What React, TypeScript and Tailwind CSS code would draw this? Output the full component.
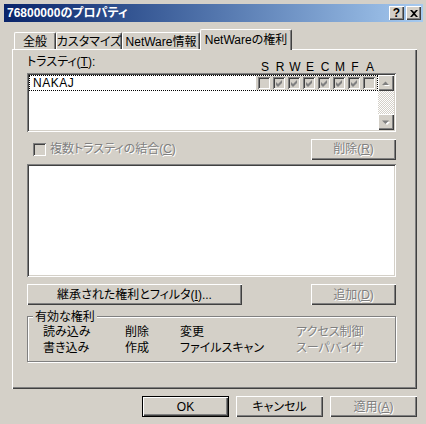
import type { ReactNode } from 'react';

const raised = 'shadow-[inset_1px_1px_#fff,inset_-1px_-1px_#404040,inset_-2px_-2px_#808080]';
const sunken = 'shadow-[inset_1px_1px_#808080,inset_-1px_-1px_#fff,inset_2px_2px_#404040,inset_-2px_-2px_#d4d0c8]';
const dim = 'text-[#808080] [text-shadow:1px_1px_0_#fff]';

const letters = ['S', 'R', 'W', 'E', 'C', 'M', 'F', 'A'];
const checked = [false, true, true, true, true, true, true, false];

function Check({ on }: { on: boolean }) {
  return (
    <div className="w-[12px] h-[12px] bg-[#d4d0c8] shadow-[inset_1px_1px_#808080,inset_-1px_-1px_#fff,inset_2px_2px_#404040] flex items-center justify-center">
      {on && (
        <svg width="7" height="7" viewBox="0 0 7 7" className="mt-[1px] ml-[1px]">
          <polygon points="0,2 2,4 6,0 6,3 2,7 0,5" fill="#808080" />
        </svg>
      )}
    </div>
  );
}

function Button({ children, w, disabled, def }: { children: ReactNode; w: string; disabled?: boolean; def?: boolean }) {
  return (
    <div className={`${w} h-[21px] ${def ? 'border border-black' : ''}`}>
      <div className={`h-full ${raised} flex items-center justify-center whitespace-nowrap ${disabled ? dim : ''}`}>{children}</div>
    </div>
  );
}

function Arrow({ up }: { up?: boolean }) {
  return (
    <div className={`w-[16px] h-[16px] bg-[#d4d0c8] ${raised} flex items-center justify-center`}>
      <svg width="8" height="5" viewBox="0 0 8 5">
        <polygon points={up ? '1,4 4,1 7,4' : '1,1 4,4 7,1'} fill="#fff" transform="translate(1,1)" />
        <polygon points={up ? '0,4 3.5,0.5 7,4' : '0,0.5 3.5,4 7,0.5'} fill="#808080" />
      </svg>
    </div>
  );
}

export default function App() {
  return (
    <div className="w-[426px] h-[424px] overflow-hidden bg-[#d4d0c8] pt-[4px] pl-[4px] pr-[3px] text-[12px] leading-[14px] text-black font-['Liberation_Sans','Noto_Sans_CJK_JP',sans-serif] [font-feature-settings:'palt']">
      {/* title bar */}
      <div className="h-[18px] flex items-center pl-[3px] pr-[2px] bg-gradient-to-r from-[#0a246a] to-[#a6caf0]">
        <span className="text-white font-bold">76800000のプロパティ</span>
        <div className="ml-auto flex gap-[2px]">
          <div className={`w-[15px] h-[14px] bg-[#d4d0c8] ${raised} flex items-center justify-center font-bold text-[12px] leading-none pb-[1px]`}>?</div>
          <div className={`w-[15px] h-[14px] bg-[#d4d0c8] ${raised} flex items-center justify-center`}>
            <svg width="8" height="7" viewBox="0 0 8 7">
              <path d="M0 0h2l2 2 2-2h2L5 3.5 8 7H6L4 5 2 7H0l3-3.5z" fill="#000" />
            </svg>
          </div>
        </div>
      </div>

      <div className="ml-[8px] w-[405px]">
        {/* tabs */}
        <div className="mt-[8px] h-[19px] flex items-end pl-[2px]">
          {['全般', 'カスタマイズ', 'NetWare情報'].map((t, i) => (
            <div
              key={t}
              className={`${['w-[42px]', 'w-[66px]', 'w-[78px]'][i]} h-[17px] whitespace-nowrap border-l border-t border-r border-l-white border-t-white border-r-[#404040] rounded-t-[2px] shadow-[inset_-1px_0_#808080] flex items-center justify-center pt-[1px]`}
            >
              {t}
            </div>
          ))}
          <div className="relative z-10 -mb-[1px] w-[92px] h-[21px] whitespace-nowrap bg-[#d4d0c8] border-l border-t border-r border-l-white border-t-white border-r-[#404040] rounded-t-[2px] shadow-[inset_-1px_0_#808080] flex items-center justify-center">
            NetWareの権利
          </div>
        </div>

        {/* panel */}
        <div className={`h-[340px] ${raised} pl-[15px] pt-[6px]`}>
          <div className="w-[369px]">
            <div className="h-[18px] flex">
              <span>
                トラスティ(<u>T</u>):
              </span>
              <div className="ml-auto mr-[20px] self-end flex gap-[3px] leading-[12px]">
                {letters.map((l) => (
                  <span key={l} className="w-[12px] text-center">
                    {l}
                  </span>
                ))}
              </div>
            </div>

            <div className={`h-[59px] bg-white ${sunken} p-[2px] flex`}>
              <div className="flex-1">
                <div className="h-[16px] border border-dotted border-black flex items-center">
                  <span className="pl-[3px] tracking-[0.5px]">NAKAJ</span>
                  <div className="ml-auto h-full bg-[#d4d0c8] flex items-center gap-[3px] px-[2px]">
                    {checked.map((c, i) => (
                      <Check key={i} on={c} />
                    ))}
                  </div>
                </div>
              </div>
              <div className="w-[16px] flex flex-col bg-[repeating-conic-gradient(#fff_0_25%,#d4d0c8_0_50%)] bg-[length:2px_2px]">
                <Arrow up />
                <div className="flex-1" />
                <Arrow />
              </div>
            </div>

            <div className="mt-[7px] h-[20px] flex items-center">
              <div className="ml-[6px] w-[13px] h-[13px] shadow-[inset_1px_1px_#808080,inset_-1px_-1px_#fff,inset_2px_2px_#404040,inset_-2px_-2px_#d4d0c8]" />
              <span className={`ml-[4px] ${dim}`}>
                複数トラスティの結合(<u>C</u>)
              </span>
              <div className="ml-auto">
                <Button w="w-[85px]" disabled>
                  削除(<u>R</u>)
                </Button>
              </div>
            </div>

            <div className={`mt-[5px] h-[113px] bg-white ${sunken}`} />

            <div className="mt-[7px] flex justify-between">
              <Button w="w-[215px]">
                継承された権利とフィルタ(<u>I</u>)...
              </Button>
              <Button w="w-[85px]" disabled>
                追加(<u>D</u>)
              </Button>
            </div>

            <div className="relative mt-[11px] h-[46px] border border-[#808080] shadow-[inset_1px_1px_#fff,1px_1px_#fff] pt-[7px] pl-[15px]">
              <span className="absolute left-[5px] -top-[7px] px-[2px] bg-[#d4d0c8]">有効な権利</span>
              <div className="grid grid-cols-[82px_55px_116px_auto] leading-[16px]">
                <span>読み込み</span>
                <span>削除</span>
                <span>変更</span>
                <span className={dim}>アクセス制御</span>
                <span>書き込み</span>
                <span>作成</span>
                <span>ファイルスキャン</span>
                <span className={dim}>スーパバイザ</span>
              </div>
            </div>
          </div>
        </div>

        {/* dialog buttons */}
        <div className="mt-[7px] flex justify-end gap-[7px]">
          <Button w="w-[87px]" def>
            OK
          </Button>
          <Button w="w-[87px]">キャンセル</Button>
          <Button w="w-[87px]" disabled>
            適用(<u>A</u>)
          </Button>
        </div>
      </div>
    </div>
  );
}
